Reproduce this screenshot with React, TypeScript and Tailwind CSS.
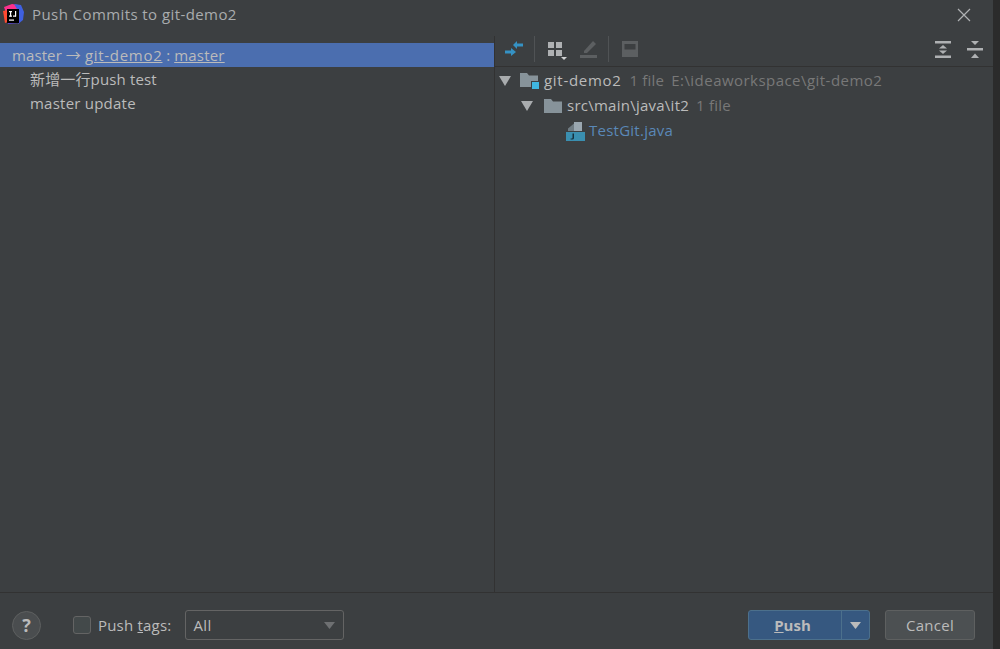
import React from "react";

const font = { fontFamily: '"Open Sans","Noto Sans CJK SC",sans-serif' };

function Logo() {
  return (
    <svg width="21" height="21" viewBox="0 0 21 21" className="shrink-0">
      <path d="M1 3 L9 0 L15 1 L15 6 L3 9 Z" fill="#fc318c" />
      <path d="M11 0 L18 1 L21 8 L20 16 L15 20 L14 5 Z" fill="#3f60e0" />
      <path d="M0 7 L5 6 L5 18 L2 19 Z" fill="#fe4a30" />
      <path d="M4 17 L16 15 L17 19 L5 20 Z" fill="#5a43d8" />
      <rect x="4" y="5" width="12" height="14" fill="#000" />
      <rect x="6" y="7" width="3" height="1.2" fill="#fff" />
      <rect x="7" y="7" width="1.2" height="5.5" fill="#fff" />
      <rect x="6" y="11.5" width="3" height="1.2" fill="#fff" />
      <rect x="12" y="7" width="1.2" height="5.5" fill="#fff" />
      <rect x="10" y="11.5" width="3" height="1.2" fill="#fff" />
      <rect x="6" y="15.5" width="5" height="1.2" fill="#fff" />
    </svg>
  );
}

function Triangle() {
  return (
    <svg width="12" height="10" viewBox="0 0 12 10" className="shrink-0">
      <path d="M0 0 H12 L6 10 Z" fill="#a9acae" />
    </svg>
  );
}

function Arrows() {
  return (
    <svg width="18" height="18" viewBox="0 0 18 18">
      <path d="M8 5 L12 1 V3.5 H18 V6.5 H12 V9 Z" fill="#3592c4" />
      <path d="M11 12 L6 8 V10.5 H0 V13.5 H6 V16 Z" fill="#3592c4" />
    </svg>
  );
}

function Grid() {
  return (
    <svg width="20" height="20" viewBox="0 0 20 20">
      <rect x="0" y="0" width="6" height="6" fill="#afb1b3" />
      <rect x="8" y="0" width="6" height="6" fill="#afb1b3" />
      <rect x="0" y="8" width="6" height="6" fill="#afb1b3" />
      <rect x="8" y="8" width="6" height="6" fill="#afb1b3" />
      <path d="M13 15 H19 L16 18 Z" fill="#d0d2d3" />
    </svg>
  );
}

function Pencil() {
  return (
    <svg width="18" height="18" viewBox="0 0 18 18">
      <path d="M4 11 L13 1 L16 4 L7 13 H4 Z" fill="#5c5f61" />
      <rect x="0" y="15" width="17" height="3" fill="#5c5f61" />
    </svg>
  );
}

function SaveBox() {
  return (
    <svg width="16" height="16" viewBox="0 0 16 16">
      <path fillRule="evenodd" d="M0 0 H16 V16 H0 Z M2.5 3 V8.5 H13.5 V3 Z" fill="#5c5f61" />
    </svg>
  );
}

function Expand() {
  return (
    <svg width="16" height="17" viewBox="0 0 16 17">
      <rect x="0" y="0" width="16" height="2.5" fill="#afb1b3" />
      <path d="M8 4 L12 7.5 H4 Z" fill="#afb1b3" />
      <path d="M8 13 L12 9.5 H4 Z" fill="#afb1b3" />
      <rect x="0" y="14.5" width="16" height="2.5" fill="#afb1b3" />
    </svg>
  );
}

function Collapse() {
  return (
    <svg width="16" height="17" viewBox="0 0 16 17">
      <path d="M4 0 H12 L8 4 Z" fill="#afb1b3" />
      <rect x="0" y="7" width="16" height="2.5" fill="#afb1b3" />
      <path d="M4 17 H12 L8 12.5 Z" fill="#afb1b3" />
    </svg>
  );
}

function ModuleFolder() {
  return (
    <svg width="20" height="18" viewBox="0 0 20 18" className="shrink-0">
      <path d="M0 1 H7 L9 3.5 H18 V15 H0 Z" fill="#87939a" />
      <rect x="11" y="9" width="9" height="9" fill="#3c3f41" />
      <rect x="12" y="10" width="7" height="7" fill="#40b6e0" />
    </svg>
  );
}

function Folder() {
  return (
    <svg width="18" height="14" viewBox="0 0 18 14" className="shrink-0">
      <path d="M0 0 H7 L9 2.5 H18 V14 H0 Z" fill="#87939a" />
    </svg>
  );
}

function JavaFile() {
  return (
    <svg width="19" height="20" viewBox="0 0 19 20" className="shrink-0">
      <path d="M2 10 V7.5 L8 2.5 V10 Z" fill="#6f7b82" />
      <path d="M8 1 H16 V10 H8 Z" fill="#9aa7b0" />
      <rect x="0" y="11" width="19" height="9" fill="#3a8fb0" />
      <path d="M6.5 12.5 H8 V17 Q8 18.6 6.2 18.6 H4.6 V17.5 H6 Q6.5 17.5 6.5 16.8 Z" fill="#16303d" />
    </svg>
  );
}

export default function App() {
  return (
    <div className="flex h-[649px] w-[1000px] overflow-hidden bg-[#2b2b2b]" style={font}>
      <div className="flex h-full w-[993px] flex-col bg-[#3c3f41] text-[15px] text-[#bbbbbb]">
        {/* title bar */}
        <div className="flex h-[36px] shrink-0 items-start justify-between pl-[3px] pr-[22px] pt-[3px]">
          <div className="flex items-center gap-[8px]">
            <Logo />
            <span className="-mt-[1px] text-[15px] leading-[24px] tracking-[0.42px] text-[#a9acae]">Push Commits to git-demo2</span>
          </div>
          <svg width="14" height="14" viewBox="0 0 14 14" className="mt-[5px]">
            <path d="M1 1 L13 13 M13 1 L1 13" stroke="#afb1b3" strokeWidth="1.2" />
          </svg>
        </div>

        {/* main */}
        <div className="flex min-h-0 flex-1 border-b border-[#323232]">
          <div className="w-[495px] shrink-0 border-r border-[#323232] pt-[7px]">
            <div className="flex h-[24px] items-center whitespace-pre bg-[#4b6eaf] pl-[12px] leading-[24px] text-[#bbbbbb]">
              <span className="tracking-[0.1px]">master → </span>
              <span className="tracking-[0.7px] underline">git-demo2</span>
              <span> : </span>
              <span className="tracking-[0.2px] underline">master</span>
            </div>
            <div className="h-[24px] pl-[30px] leading-[24px] tracking-[0.15px]">新增一行push test</div>
            <div className="h-[24px] pl-[30px] leading-[24px] tracking-[0.23px]">master update</div>
          </div>

          <div className="flex min-w-0 flex-1 flex-col">
            <div className="flex h-[31px] shrink-0 items-start justify-between border-b border-[#323232] pl-[10px] pr-[10px]">
              <div className="flex items-start">
                <div className="mt-[4px]"><Arrows /></div>
                <div className="ml-[11px] h-[26px] w-px bg-[#505355]" />
                <div className="ml-[13px] mt-[6px]"><Grid /></div>
                <div className="ml-[12px] mt-[4px]"><Pencil /></div>
                <div className="ml-[10px] h-[26px] w-px bg-[#505355]" />
                <div className="ml-[13px] mt-[5px]"><SaveBox /></div>
              </div>
              <div className="mt-[5px] flex items-center gap-[16px]">
                <Expand />
                <Collapse />
              </div>
            </div>
            <div className="flex flex-col pt-[1px]">
              <div className="flex h-[25px] items-center pl-[4px]">
                <Triangle />
                <div className="ml-[9px]"><ModuleFolder /></div>
                <span className="ml-[4px] tracking-[0.7px]">git-demo2</span>
                <span className="ml-[8px] tracking-[0.2px] text-[#787878]">1 file</span>
                <span className="ml-[7px] tracking-[0.46px] text-[#787878]">E:\ideaworkspace\git-demo2</span>
              </div>
              <div className="flex h-[25px] items-center pl-[26px]">
                <Triangle />
                <div className="ml-[11px]"><Folder /></div>
                <span className="ml-[5px] tracking-[0.25px]">src\main\java\it2</span>
                <span className="ml-[7px] tracking-[0.2px] text-[#787878]">1 file</span>
              </div>
              <div className="flex h-[25px] items-center pl-[71px]">
                <JavaFile />
                <span className="ml-[4px] tracking-[0.25px] text-[#5a88b8]">TestGit.java</span>
              </div>
            </div>
          </div>
        </div>

        {/* footer */}
        <div className="flex h-[56px] shrink-0 items-center justify-between pl-[12px] pr-[18px] pt-[8px]">
          <div className="flex items-center">
            <div className="flex h-[29px] w-[29px] items-center justify-center rounded-full border border-[#5e6060] bg-[#4a4d4f] text-[18px] font-bold text-[#bbbbbb]">?</div>
            <div className="ml-[32px] h-[18px] w-[18px] rounded-[3px] border border-[#646464] bg-[#43494a]" />
            <span className="ml-[7px] tracking-[0.2px]">Push <span className="underline">t</span>ags:</span>
            <div className="ml-[14px] flex h-[30px] w-[159px] items-center justify-between rounded-[3px] border border-[#646464] pl-[7px] pr-[8px]">
              <span className="tracking-[0.4px]">All</span>
              <svg width="11" height="7" viewBox="0 0 11 7"><path d="M0 0 H11 L5.5 7 Z" fill="#6e7072" /></svg>
            </div>
          </div>
          <div className="flex items-center gap-[15px]">
            <div className="flex h-[30px] w-[122px] items-stretch rounded-[3px] border border-[#4c708c] bg-[#365880]">
              <div className="flex w-[93px] items-center justify-center border-r border-[#4c708c] pr-[5px] font-bold text-[#bbbbbb]">
                <span><span className="underline">P</span>ush</span>
              </div>
              <div className="flex flex-1 items-center justify-center">
                <svg width="11" height="7" viewBox="0 0 11 7"><path d="M0 0 H11 L5.5 7 Z" fill="#bbbbbb" /></svg>
              </div>
            </div>
            <div className="flex h-[30px] w-[90px] items-center justify-center rounded-[3px] border border-[#5e6060] bg-[#4c5052] tracking-[0.3px]">Cancel</div>
          </div>
        </div>
      </div>
    </div>
  );
}
